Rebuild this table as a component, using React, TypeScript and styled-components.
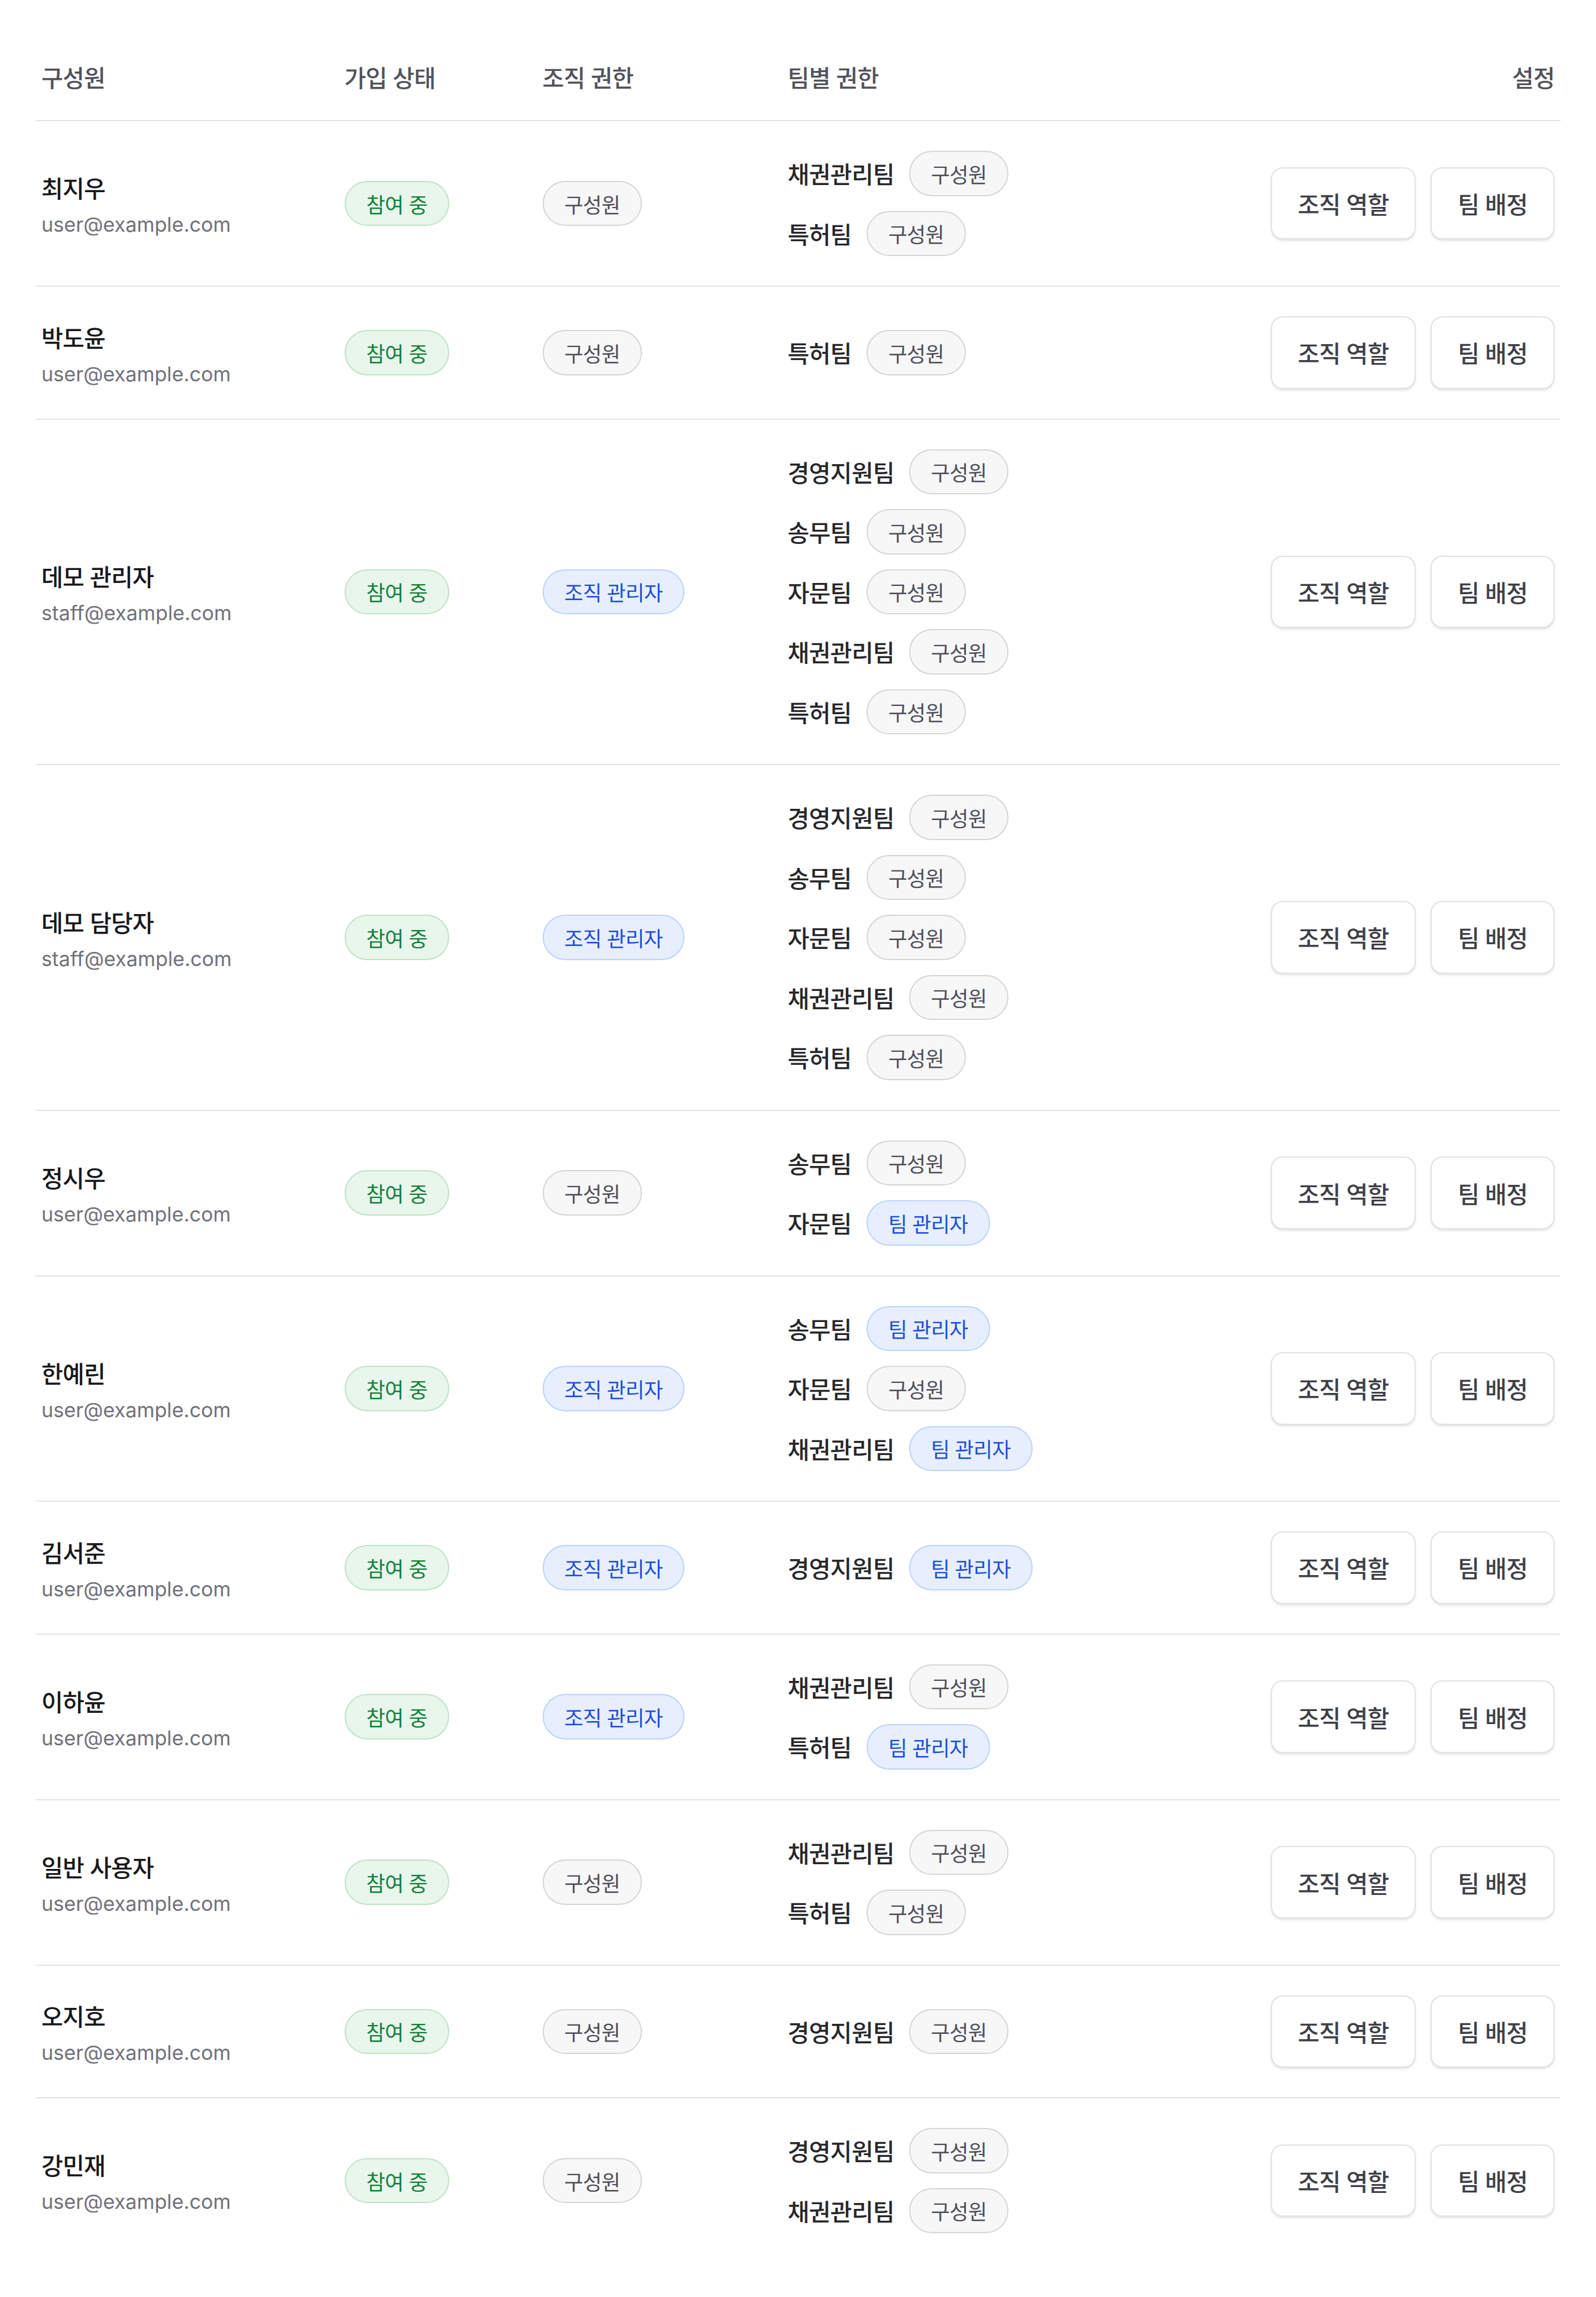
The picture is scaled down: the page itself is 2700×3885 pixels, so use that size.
import React from "react";
import styled, { createGlobalStyle, css } from "styled-components";

const GlobalStyle = createGlobalStyle`
  html, body {
    margin: 0;
    padding: 0;
    background: #ffffff;
  }
  body {
    font-family: Inter, "Noto Sans CJK KR", "Noto Sans", sans-serif;
  }
  * { box-sizing: border-box; }
`;

type Tone = "member" | "admin" | "active";

interface Team {
  name: string;
  role: "구성원" | "팀 관리자";
}

interface Member {
  name: string;
  email: string;
  orgRole: "구성원" | "조직 관리자";
  teams: Team[];
}

const m = (name: string): Team => ({ name, role: "구성원" });
const a = (name: string): Team => ({ name, role: "팀 관리자" });

const members: Member[] = [
  { name: "최지우", email: "user@example.com", orgRole: "구성원", teams: [m("채권관리팀"), m("특허팀")] },
  { name: "박도윤", email: "user@example.com", orgRole: "구성원", teams: [m("특허팀")] },
  {
    name: "데모 관리자",
    email: "staff@example.com",
    orgRole: "조직 관리자",
    teams: [m("경영지원팀"), m("송무팀"), m("자문팀"), m("채권관리팀"), m("특허팀")],
  },
  {
    name: "데모 담당자",
    email: "staff@example.com",
    orgRole: "조직 관리자",
    teams: [m("경영지원팀"), m("송무팀"), m("자문팀"), m("채권관리팀"), m("특허팀")],
  },
  { name: "정시우", email: "user@example.com", orgRole: "구성원", teams: [m("송무팀"), a("자문팀")] },
  {
    name: "한예린",
    email: "user@example.com",
    orgRole: "조직 관리자",
    teams: [a("송무팀"), m("자문팀"), a("채권관리팀")],
  },
  { name: "김서준", email: "user@example.com", orgRole: "조직 관리자", teams: [a("경영지원팀")] },
  { name: "이하윤", email: "user@example.com", orgRole: "조직 관리자", teams: [m("채권관리팀"), a("특허팀")] },
  { name: "일반 사용자", email: "user@example.com", orgRole: "구성원", teams: [m("채권관리팀"), m("특허팀")] },
  { name: "오지호", email: "user@example.com", orgRole: "구성원", teams: [m("경영지원팀")] },
  { name: "강민재", email: "user@example.com", orgRole: "구성원", teams: [m("경영지원팀"), m("채권관리팀")] },
];

const Page = styled.div`
  zoom: 2.5;
  width: 1080px;
  padding: 24px;
  background: #ffffff;
`;

const Table = styled.div`
  display: flex;
  flex-direction: column;
`;

const gridColumns = css`
  display: grid;
  grid-template-columns: 205px 134px 166px 1fr auto;
  align-items: center;
`;

const HeaderRow = styled.div`
  ${gridColumns};
  height: 58px;
  border-bottom: 1px solid #e4e4e7;
`;

const HeaderCell = styled.div<{ $align?: "left" | "right" }>`
  padding: 1px 4px 0;
  font-size: 16px;
  line-height: 22px;
  letter-spacing: -0.3px;
  font-weight: 500;
  color: #52525b;
  text-align: ${(p) => (p.$align === "right" ? "right" : "left")};
`;

const BodyRow = styled.div`
  ${gridColumns};
  padding: 20px 0;
  &:not(:last-child) {
    border-bottom: 1px solid #e4e4e7;
  }
`;

const Cell = styled.div<{ $align?: "left" | "right" }>`
  padding: 0 4px;
  display: flex;
  justify-content: ${(p) => (p.$align === "right" ? "flex-end" : "flex-start")};
  align-items: center;
`;

const Identity = styled.div`
  display: flex;
  flex-direction: column;
  gap: 2px;
  padding-top: 3px;
`;

const Name = styled.div`
  font-size: 16px;
  line-height: 24px;
  letter-spacing: -0.3px;
  font-weight: 500;
  color: #18181b;
`;

const Email = styled.div`
  font-size: 13.7px;
  line-height: 20px;
  color: #71717a;
`;

const toneStyles: Record<Tone, ReturnType<typeof css>> = {
  member: css`
    background: #f7f7f8;
    border-color: #d6d6d9;
    color: #4f4f59;
  `,
  admin: css`
    background: #e7efff;
    border-color: #bcd3fc;
    color: #1d4ed8;
  `,
  active: css`
    background: #e9f6eb;
    border-color: #bfe4c6;
    color: #12803a;
  `,
};

const Pill = styled.span<{ $tone: Tone }>`
  display: inline-flex;
  align-items: center;
  height: 30.6px;
  padding: 0 14px;
  border: 1px solid;
  border-radius: 999px;
  font-size: 14px;
  letter-spacing: -0.3px;
  white-space: nowrap;
  ${(p) => toneStyles[p.$tone]};
`;

const TeamList = styled.div`
  display: flex;
  flex-direction: column;
  gap: 10px;
`;

const TeamLine = styled.div`
  display: flex;
  align-items: center;
  gap: 10px;
`;

const TeamName = styled.span`
  font-size: 16px;
  letter-spacing: -0.3px;
  font-weight: 500;
  color: #27272a;
  white-space: nowrap;
`;

const Actions = styled.div`
  display: flex;
  gap: 10px;
`;

const ActionButton = styled.button`
  height: 49px;
  padding: 0 17.5px;
  border: 1px solid #e2e2e5;
  border-radius: 8px;
  background: #ffffff;
  box-shadow: 0 1px 2px rgba(0, 0, 0, 0.07), 0 1px 0 rgba(0, 0, 0, 0.03);
  font-family: inherit;
  font-size: 16px;
  letter-spacing: -0.3px;
  font-weight: 500;
  color: #3f3f46;
  white-space: nowrap;
  cursor: pointer;
`;

const MemberRow: React.FC<{ member: Member }> = ({ member }) => (
  <BodyRow>
    <Cell>
      <Identity>
        <Name>{member.name}</Name>
        <Email>{member.email}</Email>
      </Identity>
    </Cell>
    <Cell>
      <Pill $tone="active">참여 중</Pill>
    </Cell>
    <Cell>
      <Pill $tone={member.orgRole === "조직 관리자" ? "admin" : "member"}>{member.orgRole}</Pill>
    </Cell>
    <Cell>
      <TeamList>
        {member.teams.map((t) => (
          <TeamLine key={t.name}>
            <TeamName>{t.name}</TeamName>
            <Pill $tone={t.role === "팀 관리자" ? "admin" : "member"}>{t.role}</Pill>
          </TeamLine>
        ))}
      </TeamList>
    </Cell>
    <Cell $align="right">
      <Actions>
        <ActionButton type="button">조직 역할</ActionButton>
        <ActionButton type="button">팀 배정</ActionButton>
      </Actions>
    </Cell>
  </BodyRow>
);

export default function App() {
  return (
    <>
      <GlobalStyle />
      <Page>
        <Table>
          <HeaderRow>
            <HeaderCell>구성원</HeaderCell>
            <HeaderCell>가입 상태</HeaderCell>
            <HeaderCell>조직 권한</HeaderCell>
            <HeaderCell>팀별 권한</HeaderCell>
            <HeaderCell $align="right">설정</HeaderCell>
          </HeaderRow>
          {members.map((mem, i) => (
            <MemberRow key={i} member={mem} />
          ))}
        </Table>
      </Page>
    </>
  );
}
